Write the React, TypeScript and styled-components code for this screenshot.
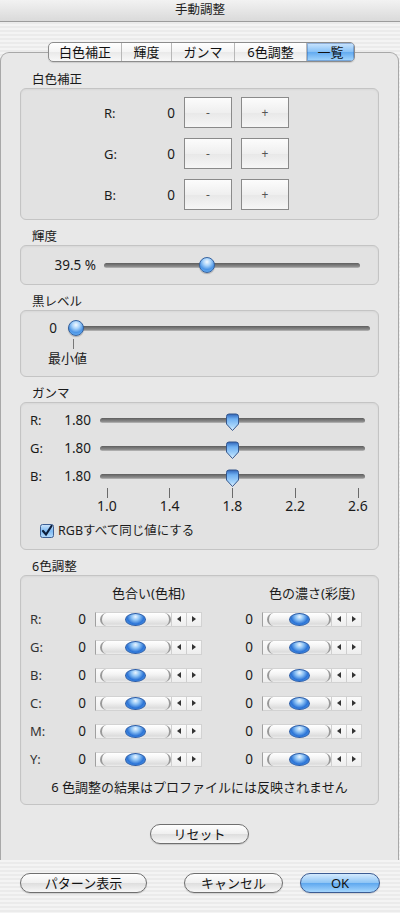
import React from "react";
import styled, { createGlobalStyle, css } from "styled-components";

const fontStack = `"Noto Sans", "Noto Sans CJK JP", sans-serif`;

const GlobalStyle = createGlobalStyle`
  html, body {
    margin: 0;
    padding: 0;
    background: #efefef;
  }
  body {
    font-family: ${fontStack};
    color: #1c1c1c;
  }
  * {
    box-sizing: border-box;
  }
`;

const pinstripe = css`
  background: repeating-linear-gradient(to bottom, #f4f4f4 0 2px, #ebebeb 2px 4px);
`;

const Window = styled.div`
  width: 400px;
  height: 913px;
  display: flex;
  flex-direction: column;
  overflow: hidden;
  ${pinstripe}
`;

const TitleBar = styled.div`
  flex: none;
  height: 22px;
  display: flex;
  align-items: center;
  justify-content: center;
  background: linear-gradient(#f2f2f2, #dadada);
  border-bottom: 1px solid #9c9c9c;
  font-size: 12.5px;
  line-height: 1;
  color: #222;
`;

const TopGap = styled.div`
  flex: none;
  height: 30px;
`;

const Panel = styled.div`
  flex: none;
  height: 808px;
  margin-right: 1px;
  padding: 0 19px;
  display: flex;
  flex-direction: column;
  background: #e8e8e8;
  border: 1px solid #a8a8a8;
  border-bottom: none;
  border-radius: 9px 9px 0 0;
`;

const TabBar = styled.div`
  position: relative;
  z-index: 1;
  align-self: flex-start;
  display: flex;
  height: 20px;
  margin: -11px 0 0 28px;
  border: 1px solid #8c8c8c;
  border-radius: 5px;
  overflow: hidden;
  background: linear-gradient(#ffffff, #f4f4f4 50%, #e9e9e9 51%, #f8f8f8);
  box-shadow: 0 1px 1px rgba(0, 0, 0, 0.12);
`;

const Tab = styled.div<{ $w: number; $active?: boolean }>`
  width: ${(p) => p.$w}px;
  font-size: 13px;
  line-height: 18px;
  text-align: center;
  color: #111;
  & + & {
    border-left: 1px solid #b8b8b8;
  }
  ${(p) =>
    p.$active &&
    css`
      background: linear-gradient(#cde6fd, #86c0f6 50%, #62aaf0 51%, #a6d7fd);
      box-shadow: inset 0 0 0 1px rgba(40, 80, 150, 0.35);
    `}
`;

const Sections = styled.div`
  display: flex;
  flex-direction: column;
  gap: 8px;
  margin-top: 9px;
`;

const Section = styled.section`
  display: flex;
  flex-direction: column;
`;

const SectionLabel = styled.div`
  height: 17px;
  padding-left: 12px;
  font-size: 12.5px;
  line-height: 17px;
  color: #1a1a1a;
`;

const GroupBox = styled.div`
  border: 1px solid #c4c4c4;
  border-radius: 6px;
  background: #e2e2e2;
  box-shadow: inset 0 1px 2px rgba(0, 0, 0, 0.05);
`;

/* 白色補正 */
const WhiteGrid = styled(GroupBox)`
  display: grid;
  grid-template-columns: 40px 22px 48px 48px;
  grid-auto-rows: 31px;
  column-gap: 9px;
  row-gap: 10px;
  align-items: center;
  padding: 8px 0 9px 83px;
`;

const Label = styled.span`
  font-size: 13px;
  line-height: 16px;
  color: #1a1a1a;
  white-space: nowrap;
`;

const Value = styled.span<{ $w?: number }>`
  ${(p) => p.$w !== undefined && css`width: ${p.$w}px; flex: none;`}
  font-size: 13.5px;
  line-height: 16px;
  text-align: right;
  color: #1a1a1a;
  white-space: nowrap;
`;

const BevelButton = styled.div`
  height: 31px;
  display: flex;
  align-items: center;
  justify-content: center;
  border: 1px solid #8a8a8a;
  background: linear-gradient(#fcfcfc, #efefef 50%, #e8e8e8 51%, #f6f6f6);
  font-size: 12px;
  color: #555;
`;

/* sliders */
const SliderBox = styled.div`
  position: relative;
  flex: 1;
  height: 20px;
  display: flex;
  align-items: center;
`;

const Track = styled.div`
  flex: 1;
  height: 5px;
  border-radius: 3px;
  background: linear-gradient(#5e5e5e, #8c8c8c 70%, #bcbcbc);
`;

const RoundThumb = styled.div`
  position: absolute;
  top: 2px;
  width: 16px;
  height: 16px;
  border-radius: 50%;
  border: 1px solid #35629f;
  background: radial-gradient(circle at 50% 28%, #f4faff 0, #a9d3fa 30%, #4c95e6 62%, #79bdf7 100%);
  box-shadow: 0 1px 1px rgba(0, 0, 0, 0.25);
`;

const PointerThumb = styled.svg`
  position: absolute;
  top: 3px;
`;

const RoundSlider = ({ frac }: { frac: number }) => (
  <SliderBox>
    <Track />
    <RoundThumb style={{ left: `calc((100% - 16px) * ${frac})` }} />
  </SliderBox>
);

const GammaSlider = ({ frac }: { frac: number }) => (
  <SliderBox>
    <Track />
    <PointerThumb
      width="15"
      height="19"
      viewBox="0 0 15 19"
      style={{ left: `calc(7px + (100% - 14px) * ${frac} - 7.5px)` }}
    >
      <defs>
        <linearGradient id="pg" x1="0" y1="0" x2="0" y2="1">
          <stop offset="0" stopColor="#2f64b8" />
          <stop offset="0.3" stopColor="#6fb0f2" />
          <stop offset="0.75" stopColor="#a9d6fb" />
          <stop offset="1" stopColor="#e6f4ff" />
        </linearGradient>
      </defs>
      <path
        d="M1.5 3.5 Q1.5 1 4 1 H11 Q13.5 1 13.5 3.5 V11 L7.5 17.5 L1.5 11 Z"
        fill="url(#pg)"
        stroke="#34568c"
        strokeWidth="1"
      />
    </PointerThumb>
  </SliderBox>
);

/* 輝度 */
const BrightnessBox = styled(GroupBox)`
  height: 40px;
  display: flex;
  align-items: center;
  gap: 8px;
  padding: 0 18px 0 30px;
`;

/* 黒レベル */
const BlackBox = styled(GroupBox)`
  display: flex;
  flex-direction: column;
  padding: 7px 8px 10px 10px;
`;

const SliderRow = styled.div<{ $gap: number }>`
  height: 20px;
  display: flex;
  align-items: center;
  gap: ${(p) => p.$gap}px;
`;

const Caption = styled.div`
  display: flex;
  flex-direction: column;
  align-items: flex-start;
  padding-left: 17px;
`;

const CaptionTick = styled.div`
  width: 1px;
  height: 10px;
  margin: 1px 0 1px 25px;
  background: #777;
`;

/* ガンマ */
const GammaBox = styled(GroupBox)`
  display: flex;
  flex-direction: column;
  padding: 7px 13px 10px 9px;
`;

const GammaRows = styled.div`
  display: flex;
  flex-direction: column;
  gap: 8px;
`;

const GammaRow = styled.div`
  display: grid;
  grid-template-columns: 19px 33px 1fr;
  column-gap: 9px;
  align-items: center;
  height: 20px;
`;

const Scale = styled.div`
  display: flex;
  justify-content: space-between;
  margin: 2px 0 0 70px;
  padding: 0 7px;
`;

const Mark = styled.div`
  width: 0;
  display: flex;
  flex-direction: column;
  align-items: center;
`;

const MarkTick = styled.div`
  width: 1px;
  height: 10px;
  background: #6a6a6a;
`;

const MarkLabel = styled.span`
  font-size: 14px;
  line-height: 16px;
  color: #1a1a1a;
`;

const CheckRow = styled.label`
  display: flex;
  align-items: center;
  gap: 4px;
  height: 16px;
  margin: 9px 0 0 10px;
  font-size: 12.5px;
  line-height: 16px;
`;

const CheckIcon = () => (
  <svg width="14" height="14" viewBox="0 0 14 14">
    <defs>
      <linearGradient id="cb" x1="0" y1="0" x2="0" y2="1">
        <stop offset="0" stopColor="#cfe6fc" />
        <stop offset="0.5" stopColor="#7fbaf2" />
        <stop offset="1" stopColor="#b5dcfd" />
      </linearGradient>
    </defs>
    <rect x="0.5" y="0.5" width="13" height="13" rx="2" fill="url(#cb)" stroke="#3d5f93" />
    <path d="M3 7 L6 10.5 L11.5 2" fill="none" stroke="#0d1f3c" strokeWidth="2.2" strokeLinecap="round" />
  </svg>
);

/* 6色調整 */
const SixBox = styled(GroupBox)`
  display: flex;
  flex-direction: column;
  padding: 8px 9px 9px 9px;
`;

const HeaderRow = styled.div`
  display: flex;
  height: 18px;
  padding-left: 40px;
`;

const HeaderCell = styled.div<{ $w: number; $mr?: number }>`
  width: ${(p) => p.$w}px;
  margin-right: ${(p) => p.$mr ?? 0}px;
  padding-left: 25px;
  text-align: center;
  font-size: 13px;
  line-height: 18px;
  white-space: nowrap;
`;

const ColorRows = styled.div`
  display: flex;
  flex-direction: column;
  gap: 8px;
  margin-top: 7px;
`;

const ColorRow = styled.div`
  display: flex;
  align-items: center;
  height: 20px;
`;

const ChannelLabel = styled.span`
  width: 40px;
  font-size: 13px;
  line-height: 16px;
  color: #333;
`;

const Channel = styled.div<{ $mr?: number }>`
  display: flex;
  align-items: center;
  gap: 9px;
  margin-right: ${(p) => p.$mr ?? 0}px;
`;

const Stepper = styled.div<{ $w: number }>`
  width: ${(p) => p.$w}px;
  height: 15px;
  display: flex;
  background: linear-gradient(#fbfbfb, #eeeeee);
  border: 1px solid #d2d2d2;
  border-left-color: #a0a0a0;
`;

const StepTrack = styled.div`
  flex: 1;
  margin: 0 0 0 4px;
  display: flex;
  align-items: center;
  justify-content: center;
  border-radius: 7px;
  border-left: 2px solid #999;
  border-right: 2px solid #999;
  background: linear-gradient(#ffffff, #f4f4f4 40%, #dcdcdc 85%, #eeeeee);
`;

const StepThumb = styled.div`
  width: 21px;
  height: 13px;
  border-radius: 50%;
  border: 1px solid #2a5ba6;
  background: radial-gradient(ellipse at 50% 25%, #eaf5ff 0, #8cc2f5 30%, #2c74d6 62%, #5fa9f2 100%);
`;

const Arrow = styled.div<{ $dir: "left" | "right" }>`
  width: 15px;
  flex: none;
  display: flex;
  align-items: center;
  justify-content: center;
  border-left: 1px solid #cfcfcf;
  &::before {
    content: "";
    border-style: solid;
    border-color: transparent;
    ${(p) =>
      p.$dir === "left"
        ? css`
            border-width: 3px 4px 3px 0;
            border-right-color: #333;
          `
        : css`
            border-width: 3px 0 3px 4px;
            border-left-color: #333;
          `}
  }
`;

const Note = styled.div`
  margin-top: 10px;
  text-align: center;
  font-size: 13px;
  line-height: 16px;
  color: #1a1a1a;
`;

/* buttons */
const PillButton = styled.div<{ $w: number; $primary?: boolean }>`
  width: ${(p) => p.$w}px;
  height: 20px;
  flex: none;
  display: flex;
  align-items: center;
  justify-content: center;
  border: 1px solid #6f6f6f;
  border-radius: 10px;
  background: linear-gradient(#fefefe, #f0f0f0 48%, #dedede 52%, #f7f7f7);
  box-shadow: 0 1px 1px rgba(0, 0, 0, 0.15);
  font-size: 13px;
  line-height: 1;
  color: #111;
  ${(p) =>
    p.$primary &&
    css`
      border-color: #3b5b92;
      background: linear-gradient(#d4eafd, #8fc5f5 48%, #5fa8ef 52%, #a5d6fd);
    `}
`;

const ResetButton = styled(PillButton)`
  align-self: center;
  margin-top: 19px;
`;

const BottomBar = styled.div`
  flex: none;
  height: 53px;
  display: flex;
  align-items: flex-start;
  padding: 13px 20px 0;
`;

const Spacer = styled.div`
  flex: 1;
`;

const ButtonGap = styled.div`
  width: 17px;
  flex: none;
`;

const whiteRows = ["R:", "G:", "B:"];
const gammaMarks = ["1.0", "1.4", "1.8", "2.2", "2.6"];
const colorRows = ["R:", "G:", "B:", "C:", "M:", "Y:"];

const Stepper6 = ({ w }: { w: number }) => (
  <Stepper $w={w}>
    <StepTrack>
      <StepThumb />
    </StepTrack>
    <Arrow $dir="left" />
    <Arrow $dir="right" />
  </Stepper>
);

export default function App() {
  return (
    <>
      <GlobalStyle />
      <Window>
        <TitleBar>手動調整</TitleBar>
        <TopGap />
        <Panel>
          <TabBar>
            <Tab $w={72}>白色補正</Tab>
            <Tab $w={50}>輝度</Tab>
            <Tab $w={63}>ガンマ</Tab>
            <Tab $w={72}>6色調整</Tab>
            <Tab $w={48} $active>
              一覧
            </Tab>
          </TabBar>

          <Sections>
            <Section>
              <SectionLabel>白色補正</SectionLabel>
              <WhiteGrid>
                {whiteRows.map((r) => (
                  <React.Fragment key={r}>
                    <Label>{r}</Label>
                    <Value>0</Value>
                    <BevelButton>-</BevelButton>
                    <BevelButton>+</BevelButton>
                  </React.Fragment>
                ))}
              </WhiteGrid>
            </Section>

            <Section>
              <SectionLabel>輝度</SectionLabel>
              <BrightnessBox>
                <Value $w={45}>39.5 %</Value>
                <RoundSlider frac={0.395} />
              </BrightnessBox>
            </Section>

            <Section>
              <SectionLabel>黒レベル</SectionLabel>
              <BlackBox>
                <SliderRow $gap={11}>
                  <Value $w={26}>0</Value>
                  <RoundSlider frac={0} />
                </SliderRow>
                <Caption>
                  <CaptionTick />
                  <Label>最小値</Label>
                </Caption>
              </BlackBox>
            </Section>

            <Section>
              <SectionLabel>ガンマ</SectionLabel>
              <GammaBox>
                <GammaRows>
                  {whiteRows.map((r) => (
                    <GammaRow key={r}>
                      <Label>{r}</Label>
                      <Value>1.80</Value>
                      <GammaSlider frac={0.5} />
                    </GammaRow>
                  ))}
                </GammaRows>
                <Scale>
                  {gammaMarks.map((m) => (
                    <Mark key={m}>
                      <MarkTick />
                      <MarkLabel>{m}</MarkLabel>
                    </Mark>
                  ))}
                </Scale>
                <CheckRow>
                  <CheckIcon />
                  RGBすべて同じ値にする
                </CheckRow>
              </GammaBox>
            </Section>

            <Section>
              <SectionLabel>6色調整</SectionLabel>
              <SixBox>
                <HeaderRow>
                  <HeaderCell $w={132} $mr={35}>
                    色合い(色相)
                  </HeaderCell>
                  <HeaderCell $w={125}>色の濃さ(彩度)</HeaderCell>
                </HeaderRow>
                <ColorRows>
                  {colorRows.map((r) => (
                    <ColorRow key={r}>
                      <ChannelLabel>{r}</ChannelLabel>
                      <Channel $mr={35}>
                        <Value $w={16}>0</Value>
                        <Stepper6 w={107} />
                      </Channel>
                      <Channel>
                        <Value $w={16}>0</Value>
                        <Stepper6 w={100} />
                      </Channel>
                    </ColorRow>
                  ))}
                </ColorRows>
                <Note>6 色調整の結果はプロファイルには反映されません</Note>
              </SixBox>
            </Section>
          </Sections>

          <ResetButton $w={99}>リセット</ResetButton>
        </Panel>

        <BottomBar>
          <PillButton $w={127}>パターン表示</PillButton>
          <Spacer />
          <PillButton $w={99}>キャンセル</PillButton>
          <ButtonGap />
          <PillButton $w={80} $primary>
            OK
          </PillButton>
        </BottomBar>
      </Window>
    </>
  );
}
